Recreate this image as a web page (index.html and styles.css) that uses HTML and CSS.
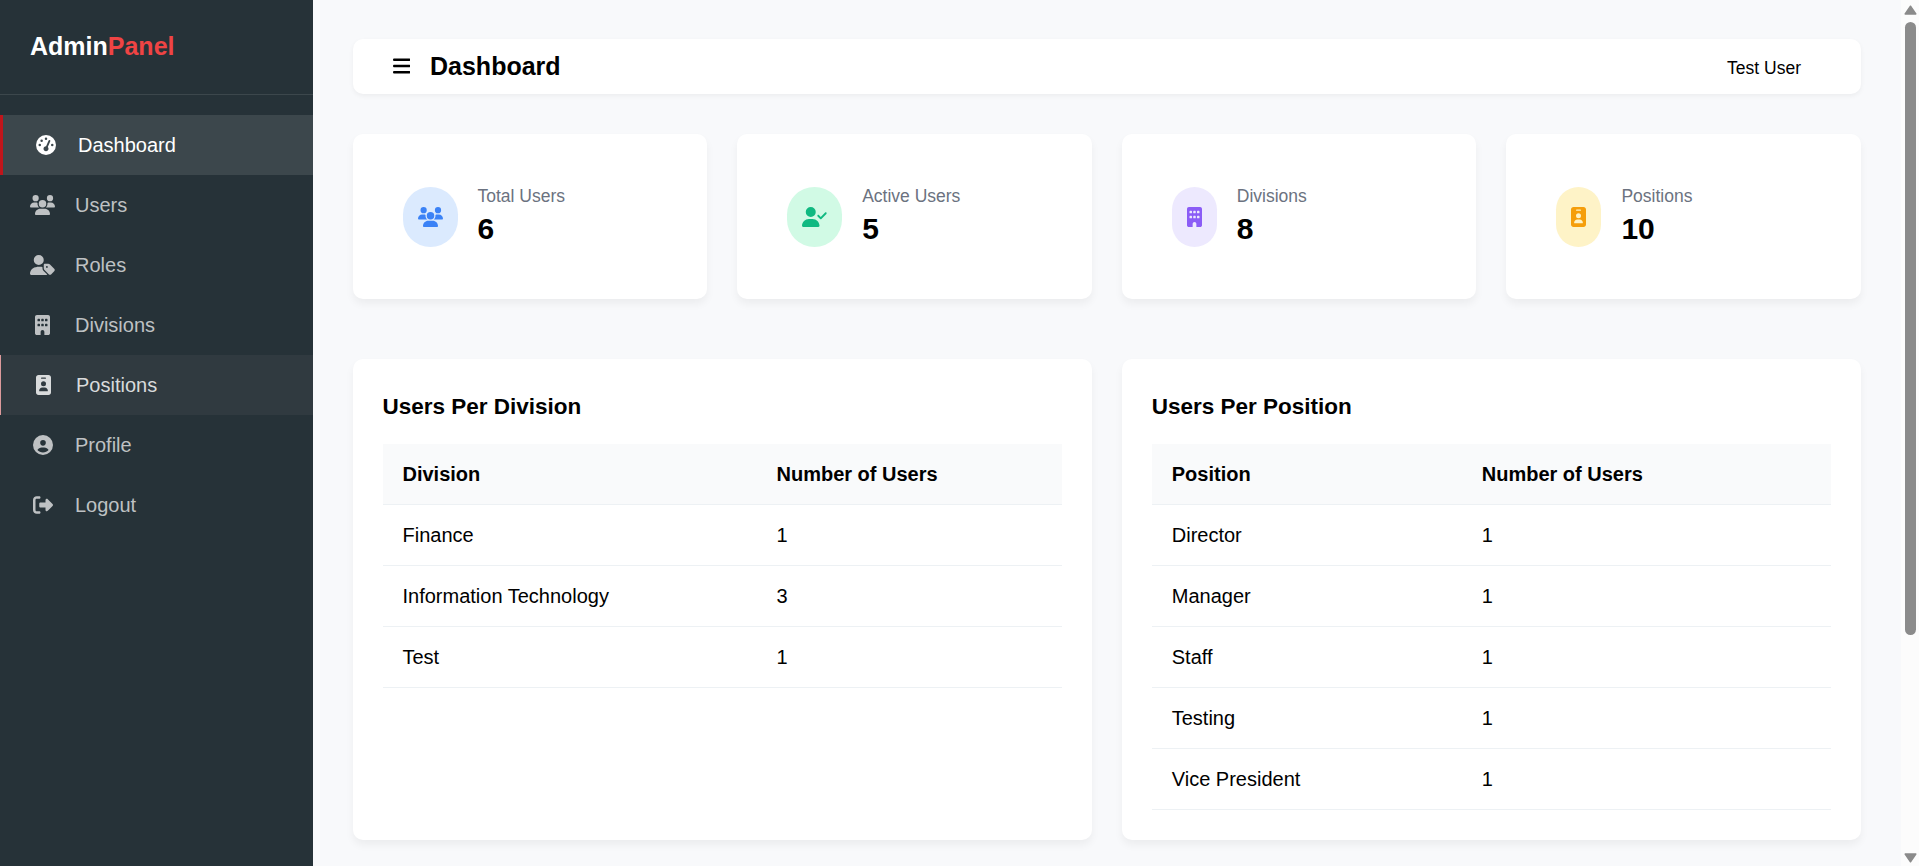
FILE: index.html
```html
<!DOCTYPE html>
<html lang="en">
<head>
<meta charset="utf-8">
<title>Dashboard</title>
<link rel="stylesheet" href="styles.css">
</head>
<body>
<svg class="sprite" aria-hidden="true">
<symbol id="gauge" viewBox="0 0 512 512"><path d="M0 256a256 256 0 1 1 512 0A256 256 0 1 1 0 256zM288 96a32 32 0 1 0-64 0 32 32 0 1 0 64 0zM256 416c35.300 0 64-28.700 64-64 0-17.400-6.900-33.100-18.100-44.600L366 161.700c5.300-12.100-.2-26.300-12.300-31.600s-26.300 .2-31.600 12.300L257.900 288c-.6 0-1.300 0-1.900 0-35.300 0-64 28.700-64 64s28.700 64 64 64zM176 144a32 32 0 1 0-64 0 32 32 0 1 0 64 0zM96 288a32 32 0 1 0 0-64 32 32 0 1 0 0 64zm352-32a32 32 0 1 0-64 0 32 32 0 1 0 64 0z"/></symbol>
<symbol id="users" viewBox="0 0 640 512"><path d="M144 0a80 80 0 1 1 0 160A80 80 0 1 1 144 0zM512 0a80 80 0 1 1 0 160A80 80 0 1 1 512 0zM0 298.700C0 239.800 47.800 192 106.700 192h42.700c15.900 0 31 3.500 44.600 9.700-1.300 7.200-1.900 14.700-1.900 22.300 0 38.200 16.800 72.500 43.300 96-.2 0-.4 0-.7 0H21.300C9.600 320 0 310.400 0 298.700zM405.300 320c-.2 0-.4 0-.7 0 26.600-23.500 43.300-57.800 43.300-96 0-7.600-.7-15-1.900-22.300 13.600-6.300 28.700-9.700 44.600-9.700h42.700C592.200 192 640 239.800 640 298.700c0 11.800-9.600 21.300-21.300 21.300H405.300zM224 224a96 96 0 1 1 192 0 96 96 0 1 1-192 0zM128 485.300C128 411.700 187.700 352 261.300 352h117.400C452.300 352 512 411.700 512 485.300c0 14.700-11.900 26.700-26.700 26.700H154.700c-14.700 0-26.700-11.900-26.700-26.700z"/></symbol>
<symbol id="user-tag" viewBox="0 0 640 512"><path d="M224 256A128 128 0 1 0 224 0a128 128 0 1 0 0 256zm-45.700 48C79.800 304 0 383.800 0 482.300 0 498.700 13.300 512 29.700 512h388.600c10 0 18.800-4.900 24.200-12.500l-99.200-99.200c-14.900-14.900-23.300-35.100-23.300-56.100v-33.200c-15.700-4.600-32.400-7-49.700-7h-92zM384 224c-17.700 0-32 14.300-32 32v82.700c0 17 6.700 33.300 18.700 45.300l107.400 107.300c18.700 18.700 49.100 18.700 67.900 0l73.400-73.400c18.700-18.700 18.700-49.100 0-67.900L512 242.700c-12-12-28.300-18.700-45.300-18.700H384zm24 80a24 24 0 1 1 48 0 24 24 0 1 1-48 0z"/></symbol>
<symbol id="user-check" viewBox="0 0 640 512"><path d="M96 128a128 128 0 1 1 256 0A128 128 0 1 1 96 128zM0 482.300C0 383.800 79.800 304 178.300 304h91.400C368.200 304 448 383.800 448 482.300c0 16.400-13.300 29.700-29.700 29.700H29.700C13.300 512 0 498.700 0 482.300zM625 177L497 305c-9.400 9.400-24.600 9.400-33.900 0l-64-64c-9.400-9.400-9.400-24.600 0-33.900s24.600-9.400 33.900 0l47 47L591 143c9.400-9.400 24.600-9.400 33.900 0s9.400 24.600 0 33.900z"/></symbol>
<symbol id="building" viewBox="0 0 384 512"><path d="M48 0C21.500 0 0 21.500 0 48v416c0 26.500 21.500 48 48 48h96v-80c0-26.500 21.500-48 48-48s48 21.500 48 48v80h96c26.500 0 48-21.500 48-48V48c0-26.500-21.500-48-48-48H48zM64 240c0-8.800 7.200-16 16-16h32c8.800 0 16 7.200 16 16v32c0 8.800-7.200 16-16 16H80c-8.800 0-16-7.200-16-16v-32zm112-16h32c8.800 0 16 7.200 16 16v32c0 8.800-7.200 16-16 16h-32c-8.800 0-16-7.200-16-16v-32c0-8.800 7.200-16 16-16zm80 16c0-8.800 7.200-16 16-16h32c8.800 0 16 7.200 16 16v32c0 8.800-7.200 16-16 16h-32c-8.800 0-16-7.200-16-16v-32zM80 96h32c8.800 0 16 7.200 16 16v32c0 8.800-7.200 16-16 16H80c-8.800 0-16-7.200-16-16v-32c0-8.800 7.200-16 16-16zm80 16c0-8.800 7.200-16 16-16h32c8.800 0 16 7.200 16 16v32c0 8.800-7.200 16-16 16h-32c-8.800 0-16-7.200-16-16v-32zm112-16h32c8.800 0 16 7.200 16 16v32c0 8.800-7.200 16-16 16h-32c-8.800 0-16-7.200-16-16v-32c0-8.800 7.200-16 16-16z"/></symbol>
<symbol id="badge" viewBox="0 0 384 512"><path d="M64 0C28.700 0 0 28.700 0 64v384c0 35.300 28.700 64 64 64h256c35.300 0 64-28.700 64-64V64c0-35.300-28.700-64-64-64H64zm96 320h64c44.200 0 80 35.800 80 80 0 8.800-7.200 16-16 16H96c-8.800 0-16-7.200-16-16 0-44.200 35.800-80 80-80zm-32-96a64 64 0 1 1 128 0 64 64 0 1 1-128 0zM144 64h96c8.800 0 16 7.200 16 16s-7.200 16-16 16h-96c-8.800 0-16-7.200-16-16s7.200-16 16-16z"/></symbol>
<symbol id="profile" viewBox="0 0 512 512"><path d="M399 384.200C376.900 345.800 335.400 320 288 320h-64c-47.400 0-88.900 25.800-111 64.200 35.200 39.200 86.200 63.800 143 63.800s107.800-24.700 143-63.800zM0 256a256 256 0 1 1 512 0A256 256 0 1 1 0 256zm256 16a72 72 0 1 0 0-144 72 72 0 1 0 0 144z"/></symbol>
<symbol id="logout" viewBox="0 0 512 512"><path d="M377.900 105.900L500.700 228.700c7.200 7.200 11.300 17.100 11.300 27.300s-4.100 20.100-11.300 27.300L377.900 406.100c-6.400 6.400-15 9.900-24 9.900-18.700 0-33.900-15.200-33.900-33.900V320H192c-17.700 0-32-14.300-32-32v-64c0-17.700 14.300-32 32-32h128v-62.100c0-18.700 15.200-33.900 33.900-33.900 9 0 17.600 3.600 24 9.900zM160 96H96c-17.700 0-32 14.300-32 32v256c0 17.700 14.300 32 32 32h64c17.700 0 32 14.300 32 32s-14.300 32-32 32H96c-53 0-96-43-96-96V128c0-53 43-96 96-96h64c17.700 0 32 14.300 32 32s-14.300 32-32 32z"/></symbol>
<symbol id="bars" viewBox="0 0 448 512"><path d="M0 96c0-17.700 14.300-32 32-32h384c17.700 0 32 14.300 32 32s-14.300 32-32 32H32C14.300 128 0 113.700 0 96zm0 160c0-17.700 14.300-32 32-32h384c17.700 0 32 14.300 32 32s-14.300 32-32 32H32c-17.700 0-32-14.300-32-32zm448 160c0 17.700-14.300 32-32 32H32c-17.700 0-32-14.300-32-32s14.300-32 32-32h384c17.700 0 32 14.300 32 32z"/></symbol>
</svg>
<div class="app">
<aside class="sidebar">
<div class="brand">Admin<span class="brand-accent">Panel</span></div>
<nav class="nav">
<a class="nav-item active"><span class="nav-icon"><svg class="icon"><use href="#gauge"/></svg></span>Dashboard</a>
<a class="nav-item"><span class="nav-icon"><svg class="icon wide"><use href="#users"/></svg></span>Users</a>
<a class="nav-item"><span class="nav-icon"><svg class="icon wide"><use href="#user-tag"/></svg></span>Roles</a>
<a class="nav-item"><span class="nav-icon"><svg class="icon narrow"><use href="#building"/></svg></span>Divisions</a>
<a class="nav-item hovered"><span class="nav-icon"><svg class="icon narrow"><use href="#badge"/></svg></span>Positions</a>
<a class="nav-item"><span class="nav-icon"><svg class="icon"><use href="#profile"/></svg></span>Profile</a>
<a class="nav-item"><span class="nav-icon"><svg class="icon"><use href="#logout"/></svg></span>Logout</a>
</nav>
</aside>
<main class="main">
<header class="topbar">
<svg class="icon menu"><use href="#bars"/></svg>
<h1 class="title">Dashboard</h1>
<span class="user">Test User</span>
</header>
<section class="stats">
<div class="card stat"><span class="pill blue"><svg class="icon wide"><use href="#users"/></svg></span><div><div class="label">Total Users</div><div class="value">6</div></div></div>
<div class="card stat"><span class="pill green"><svg class="icon wide"><use href="#user-check"/></svg></span><div><div class="label">Active Users</div><div class="value">5</div></div></div>
<div class="card stat"><span class="pill purple"><svg class="icon narrow"><use href="#building"/></svg></span><div><div class="label">Divisions</div><div class="value">8</div></div></div>
<div class="card stat"><span class="pill amber"><svg class="icon narrow"><use href="#badge"/></svg></span><div><div class="label">Positions</div><div class="value">10</div></div></div>
</section>
<section class="tables">
<div class="card panel">
<h2 class="heading">Users Per Division</h2>
<table class="table division">
<thead><tr><th>Division</th><th>Number of Users</th></tr></thead>
<tbody>
<tr><td>Finance</td><td>1</td></tr>
<tr><td>Information Technology</td><td>3</td></tr>
<tr><td>Test</td><td>1</td></tr>
</tbody>
</table>
</div>
<div class="card panel">
<h2 class="heading">Users Per Position</h2>
<table class="table position">
<thead><tr><th>Position</th><th>Number of Users</th></tr></thead>
<tbody>
<tr><td>Director</td><td>1</td></tr>
<tr><td>Manager</td><td>1</td></tr>
<tr><td>Staff</td><td>1</td></tr>
<tr><td>Testing</td><td>1</td></tr>
<tr><td>Vice President</td><td>1</td></tr>
</tbody>
</table>
</div>
</section>
</main>
<div class="scrollbar">
<svg class="arrow" viewBox="0 0 13 10"><path d="M6.500 1.200 11.800 9H1.200z"/></svg>
<div class="thumb"></div>
<svg class="arrow down" viewBox="0 0 13 10"><path d="M1.200 1h10.600L6.500 8.800z"/></svg>
</div>
</div>
</body>
</html>
```
FILE: styles.css
```css
* { box-sizing: border-box; }
body {
  margin: 0;
  background: #f8f9fb;
  color: #000;
  font: 20px/30px "Liberation Sans", Arial, sans-serif;
}
.sprite { display: none; }
.icon { display: block; width: 20px; height: 20px; fill: currentColor; flex: none; }
.icon.wide { width: 25px; }
.icon.narrow { width: 15px; }
.app { display: flex; height: 866px; overflow: hidden; }

.sidebar { width: 313px; flex: none; background: #263238; }
.brand {
  height: 95px;
  padding: 31px 30px 0;
  border-bottom: 1px solid #3c474c;
  color: #fff;
  font-size: 25px;
  font-weight: bold;
}
.brand-accent { color: #ef4444; }
.nav { padding-top: 20px; }
.nav-item {
  display: flex;
  align-items: center;
  height: 60px;
  padding-left: 30px;
  color: #bec1c3;
}
.nav-icon {
  display: flex;
  justify-content: center;
  width: 25px;
  margin-right: 20px;
  padding-bottom: 1px;
}
.nav-item.active { border-left: 3px solid #c0151b; background: #3c474c; color: #fff; }
.nav-item.hovered { border-left: 1px solid #dc9a9c; background: #303a40; color: #d9dbdc; }

.main { flex: 1; padding: 39px 40px 0 39.5px; }
.card, .topbar { background: #fff; border-radius: 10px; }
.topbar {
  display: flex;
  align-items: center;
  height: 55px;
  padding: 0 60px 0 40px;
  box-shadow: 0 2px 5px rgba(0, 0, 0, 0.05);
}
.icon.menu { width: 17.5px; margin-bottom: 1px; }
.title { margin: 0 0 1px 20px; font-size: 25px; line-height: 30px; }
.user { margin-left: auto; padding-top: 2px; font-size: 17.5px; }

.card { box-shadow: 0 5px 8px rgba(0, 0, 0, 0.05); }
.stats { display: grid; grid-template-columns: repeat(4, 1fr); gap: 30px; margin-top: 40px; }
.stat { display: flex; align-items: center; height: 165px; padding: 0 50px; }
.pill {
  display: flex;
  align-items: center;
  height: 60px;
  margin: 1px 20px 0 0;
  padding: 0 15px 1px;
  border-radius: 30px;
}
.blue { background: #dbeafe; color: #3b82f6; }
.green { background: #d1fae5; color: #10b981; }
.purple { background: #ede9fe; color: #8b5cf6; }
.amber { background: #fef3c7; color: #f59e0b; }
.label { color: #6b7280; font-size: 17.5px; line-height: 25px; }
.value { margin-bottom: 1px; font-size: 30px; font-weight: bold; line-height: 39px; }

.tables { display: grid; grid-template-columns: repeat(2, 1fr); gap: 30px; margin-top: 60px; }
.panel { height: 481px; padding: 30px; }
.heading { margin: 0 0 20px; font-size: 22.5px; line-height: 35px; }
.table { width: 100%; table-layout: fixed; border-spacing: 0; text-align: left; }
.table th, .table td { height: 61px; padding: 0 20px; border-bottom: 1px solid #edf1f4; }
.table th { background: #f9fafb; }
.division th:first-child { width: 374px; }
.position th:first-child { width: 310px; }

.scrollbar {
  display: flex;
  flex-direction: column;
  align-items: center;
  width: 18px;
  padding: 5px 0 3px 1px;
  background: #fcfcfc;
}
.arrow {
  width: 13px;
  height: 10px;
  fill: #8b8b8b;
  stroke: #8b8b8b;
  stroke-width: 1.5px;
  stroke-linejoin: round;
}
.thumb { width: 11px; height: 613px; margin-top: 7px; border-radius: 6px; background: #8b8b8b; }
.arrow.down { margin-top: auto; }
```
